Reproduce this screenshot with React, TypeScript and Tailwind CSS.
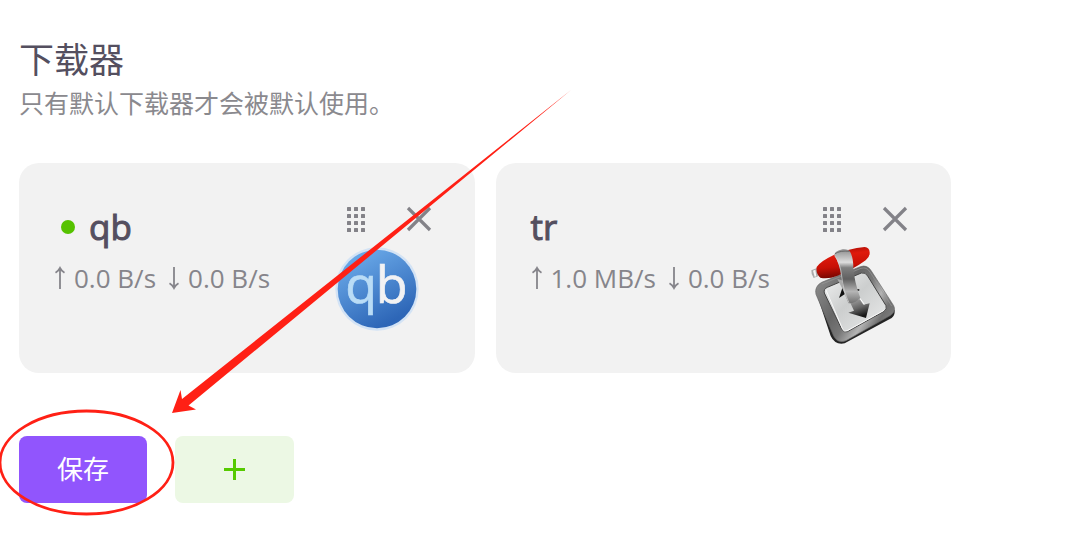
import React from "react";

type Downloader = {
  name: string;
  isDefault: boolean;
  up: string;
  down: string;
  logo: React.ReactNode;
};

function QbLogo() {
  return (
    <svg viewBox="42 168 258 300" className="h-[100px] w-[86px]" role="img" aria-label="qBittorrent">
      <defs>
        <linearGradient id="qb-fill" x1="0.25" y1="0.05" x2="0.7" y2="0.9">
          <stop offset="0" stopColor="#6aa9e8" />
          <stop offset="1" stopColor="#2d66b7" />
        </linearGradient>
      </defs>
      <circle cx="171" cy="297" r="125" fill="#d3e3f5" />
      <circle cx="171" cy="297" r="118" fill="url(#qb-fill)" />
      <text y="338" fontSize="156" strokeWidth="2" fontFamily="'Open Sans', 'Noto Sans', sans-serif">
        <tspan x="76" fill="#b9dcf6" stroke="#b9dcf6">q</tspan>
        <tspan x="167" fill="#f2f2f3" stroke="#f2f2f3">b</tspan>
      </text>
    </svg>
  );
}

function TransmissionLogo() {
  return (
    <svg viewBox="30 168 258 300" className="h-[100px] w-[86px]" role="img" aria-label="Transmission">
      <defs>
        <linearGradient id="tr-frame" x1="0" y1="0.2" x2="1" y2="0.8">
          <stop offset="0" stopColor="#8b8b8b" />
          <stop offset="0.35" stopColor="#666" />
          <stop offset="0.52" stopColor="#777" />
          <stop offset="0.68" stopColor="#b4b4b4" />
          <stop offset="0.82" stopColor="#707070" />
          <stop offset="1" stopColor="#858585" />
        </linearGradient>
        <linearGradient id="tr-plate" x1="0" y1="0" x2="1" y2="1">
          <stop offset="0" stopColor="#f2f3f3" />
          <stop offset="0.45" stopColor="#cccece" />
          <stop offset="1" stopColor="#eceded" />
        </linearGradient>
        <linearGradient id="tr-red" x1="0.4" y1="0" x2="0.6" y2="1">
          <stop offset="0" stopColor="#a50d06" />
          <stop offset="0.25" stopColor="#df1a0c" />
          <stop offset="0.6" stopColor="#c81005" />
          <stop offset="1" stopColor="#650400" />
        </linearGradient>
        <linearGradient id="tr-strap" x1="0" y1="0" x2="0" y2="1">
          <stop offset="0" stopColor="#8d8d8d" />
          <stop offset="0.24" stopColor="#dedede" />
          <stop offset="0.34" stopColor="#808080" />
          <stop offset="0.55" stopColor="#606060" />
          <stop offset="0.78" stopColor="#b5b5b5" />
          <stop offset="1" stopColor="#717171" />
        </linearGradient>
        <linearGradient id="tr-arrow" x1="0" y1="0" x2="0.4" y2="1">
          <stop offset="0" stopColor="#aaa" />
          <stop offset="0.55" stopColor="#666" />
          <stop offset="1" stopColor="#161616" />
        </linearGradient>
      </defs>
      <path d="M47 303 L92 438 Q105 466 134 460 L275 384 Q285 377 284 361 L276 355 L120 444Z" fill="#242424" />
      <path
        d="M65 277 L181 230 Q202 223 214 243 L281 347 Q289 364 272 376 L138 452 Q113 462 101 438 L48 313 Q43 289 65 277Z"
        fill="url(#tr-frame)"
        stroke="#666"
        strokeWidth="2"
      />
      <path d="M66 282 L183 235 Q200 230 210 246 L275 348" fill="none" stroke="#999" strokeWidth="2" />
      <path
        d="M82 292 L184 249 Q196 246 203 258 L258 347 Q262 358 252 364 L142 425 Q131 429 125 417 L73 309 Q70 297 82 292Z"
        fill="url(#tr-plate)"
        stroke="#444"
        strokeWidth="3"
      />
      <path d="M78 300 L128 418 Q133 427 142 422 L252 361" fill="none" stroke="#fafafa" strokeWidth="3" />
      <path d="M117 324 L129 288 L154 313 L138 310Z" fill="#111" />
      <path d="M166 297 L178 297 L178 302 L167 304Z" fill="#333" />
      <path d="M112 267 L128 298 L145 337 L170 330 L151 277Z" fill="#aaa" />
      <path d="M150 337 L179 328 L190 344 L209 340 L198 384 L145 368 L162 362Z" fill="url(#tr-arrow)" />
      <path d="M179 324 L193 343" stroke="#fff" strokeWidth="3" />
      <path d="M34 241 L51 234 L54 259 L41 264 Q33 254 34 241Z" fill="#aaa" />
      <path d="M39 242 L46 239 L49 259 L44 260Z" fill="#f5f5f5" />
      <path
        d="M50 231 Q60 214 103 194 Q146 176 194 171 Q208 172 209 187 Q210 201 197 211 Q160 238 113 257 Q85 268 61 263 Q47 252 50 231Z"
        fill="url(#tr-red)"
      />
      <path
        d="M103 195 Q104 183 128 178 Q147 177 151 187 Q160 204 160 233 Q162 271 181 324 Q165 341 146 340 Q127 302 124 258 Q117 217 103 195Z"
        fill="url(#tr-strap)"
      />
      <path d="M105 191 Q120 181 149 184" fill="none" stroke="#686868" strokeWidth="3" />
      <path d="M104 197 Q121 220 125 258 Q130 305 147 338" fill="none" stroke="#ddd" strokeWidth="2" />
    </svg>
  );
}

function DragIcon() {
  return (
    <svg viewBox="0 0 20 26" className="h-[26px] w-5" fill="#838288" aria-hidden="true">
      {[1, 8, 15].map((x) =>
        [1, 8, 15, 22].map((y) => <rect key={`${x}-${y}`} x={x} y={y} width="4" height="4" rx="0.5" />),
      )}
    </svg>
  );
}

function CloseIcon() {
  return (
    <svg viewBox="0 0 26 26" className="size-[26px]" aria-hidden="true">
      <path d="M2 2 L24 24 M24 2 L2 24" stroke="#838288" strokeWidth="3.2" />
    </svg>
  );
}

function Speed({ direction, value }: { direction: "up" | "down"; value: string }) {
  return (
    <span className="flex items-center gap-2">
      <svg
        viewBox="0 0 12 24"
        className="h-6 w-3"
        fill="none"
        stroke="currentColor"
        strokeWidth="1.8"
        role="img"
        aria-label={direction === "up" ? "上传" : "下载"}
      >
        {direction === "up" ? (
          <path d="M6 23 V2 M1.5 6.8 Q4.5 5 6 2 Q7.5 5 10.5 6.8" />
        ) : (
          <path d="M6 1 V22 M1.5 17.2 Q4.5 19 6 22 Q7.5 19 10.5 17.2" />
        )}
      </svg>
      <span>{value}</span>
    </span>
  );
}

function DownloaderCard({ item }: { item: Downloader }) {
  return (
    <article className="flex h-[210px] justify-between rounded-[20px] bg-[#f2f2f2] pr-[43px] pl-[35px]">
      <div className="pt-10">
        <h2 className="flex h-12 items-center text-[35px] font-medium text-[#544f5f] [-webkit-text-stroke:1px_#544f5f]">
          {item.isDefault && <span className="mr-3.5 ml-[7px] size-3.5 rounded-full bg-[#56c200]" />}
          {item.name}
        </h2>
        <p className="mt-[7px] flex gap-3 text-[26px] leading-10 whitespace-nowrap text-[#86858b]">
          <Speed direction="up" value={item.up} />
          <Speed direction="down" value={item.down} />
        </p>
      </div>
      <div className="flex flex-col items-end pt-[43px]">
        <div className="flex gap-10">
          <button type="button" aria-label="拖动">
            <DragIcon />
          </button>
          <button type="button" aria-label="关闭">
            <CloseIcon />
          </button>
        </div>
        <div className="mt-3.5 mr-3">{item.logo}</div>
      </div>
    </article>
  );
}

const downloaders: Downloader[] = [
  { name: "qb", isDefault: true, up: "0.0 B/s", down: "0.0 B/s", logo: <QbLogo /> },
  { name: "tr", isDefault: false, up: "1.0 MB/s", down: "0.0 B/s", logo: <TransmissionLogo /> },
];

export default function App() {
  return (
    <main className="relative min-h-screen bg-white px-[19px] pt-[34px] font-['Open_Sans','Noto_Sans_CJK_SC',sans-serif]">
      <header className="font-['Noto_Sans_CJK_SC',sans-serif]">
        <h1 className="text-[35px] leading-[48px] text-[#544f5f]">下载器</h1>
        <p className="text-[25px] leading-10 text-[#8a898e]">只有默认下载器才会被默认使用。</p>
      </header>
      <section className="mt-[41px] grid max-w-[932px] grid-cols-2 gap-[21px]">
        {downloaders.map((item) => (
          <DownloaderCard key={item.name} item={item} />
        ))}
      </section>
      <div className="mt-[63px] flex gap-7">
        <button type="button" className="h-[67px] w-32 rounded-lg bg-[#9155fd] text-[26px] text-white">
          保存
        </button>
        <button
          type="button"
          aria-label="添加"
          className="flex h-[67px] w-[119px] items-center justify-center rounded-lg bg-[#ecf8e4]"
        >
          <svg viewBox="0 0 22 22" className="size-[22px]" aria-hidden="true">
            <path d="M10.5 0 V21 M0 10.5 H21" stroke="#56ca00" strokeWidth="3" />
          </svg>
        </button>
      </div>
      <svg
        viewBox="0 0 580 538"
        className="pointer-events-none absolute top-0 left-0 h-[538px] w-[580px]"
        aria-hidden="true"
      >
        <ellipse cx="86.5" cy="462.5" rx="86.5" ry="51.5" fill="none" stroke="#ff2015" strokeWidth="2.8" />
        <path d="M571 90 L182 399 L180.5 390 L172 413 L196 409.5 L188.5 405.5Z" fill="#ff2015" />
      </svg>
    </main>
  );
}
